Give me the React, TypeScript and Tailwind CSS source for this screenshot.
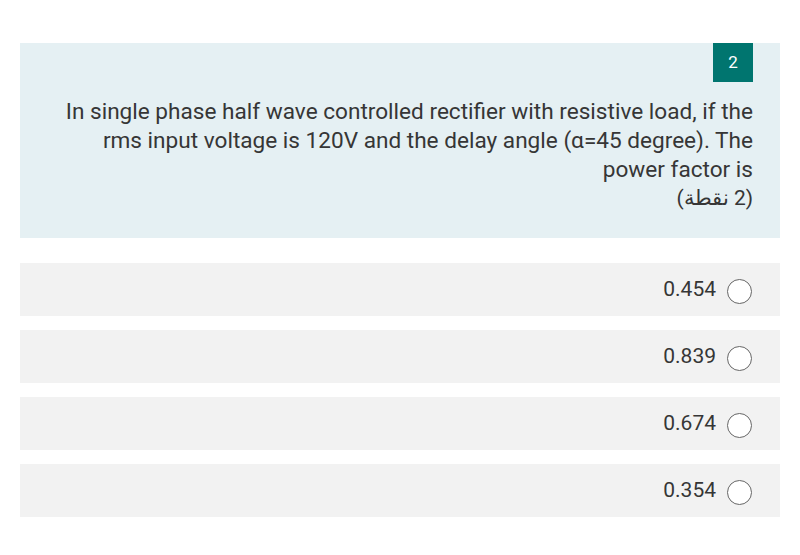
import React from "react";

const options = ["0.454", "0.839", "0.674", "0.354"];

export default function App() {
  return (
    <div className="w-[800px] h-[555px] bg-white px-5 pt-[43px]" style={{ fontFamily: "Roboto, 'Noto Sans', sans-serif" }}>
      <div className="bg-[#e5f0f3] pr-[27px] pb-[25px] flex flex-col items-end">
        <div className="w-10 h-[39px] bg-[#00756f] text-white text-[17px] flex items-center justify-center">2</div>
        <div className="mt-[15px] text-right text-[22.6px] leading-[29px] text-[#363636] pl-[30px]">
          In single phase half wave controlled rectifier with resistive load, if the rms input voltage is 120V and the delay angle (α=45 degree). The power factor is
          <div dir="rtl" className="text-right text-[21px]">(2 نقطة)</div>
        </div>
      </div>
      <div className="mt-[25px] flex flex-col gap-[14px]">
        {options.map((o) => (
          <div key={o} className="h-[53px] bg-[#f2f2f2] flex items-center justify-end pr-[28px] gap-[11px]">
            <span className="text-[21px] text-[#363636]">{o}</span>
            <span className="w-[25px] h-[25px] rounded-full border-[1.5px] border-[#666666] bg-white mt-[3px]" />
          </div>
        ))}
      </div>
    </div>
  );
}
